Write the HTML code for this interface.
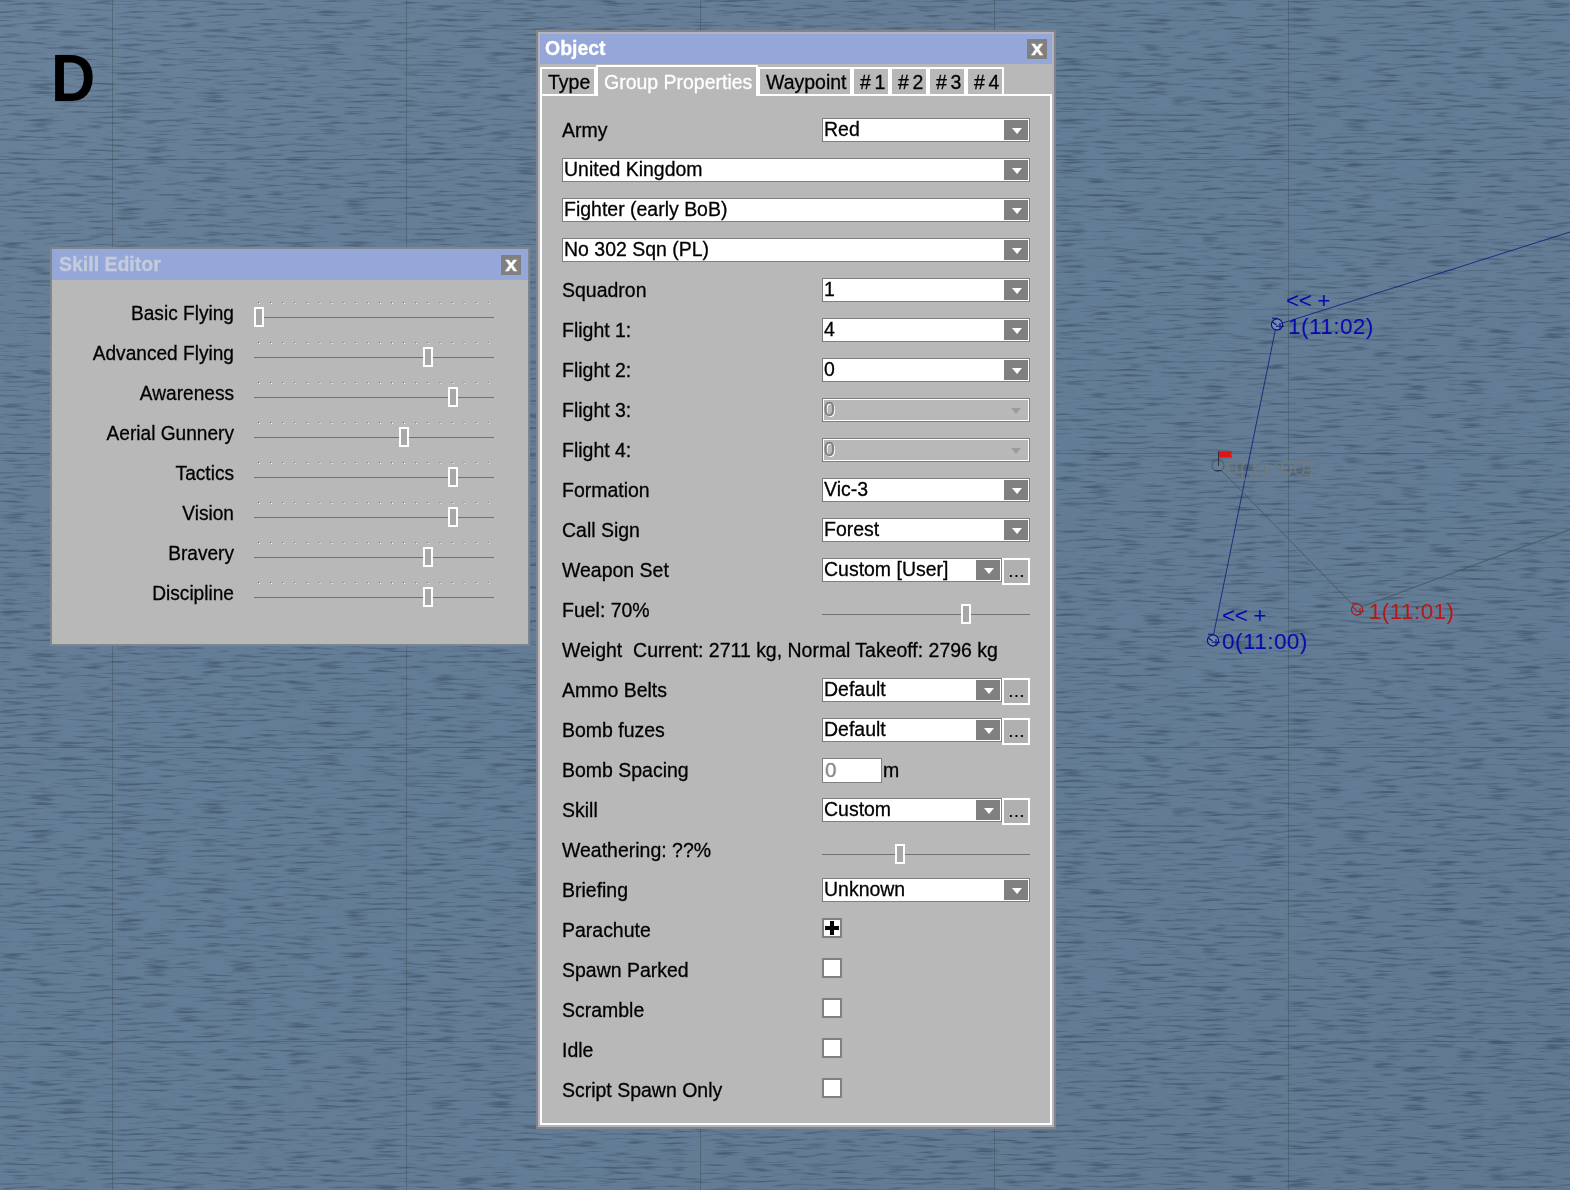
<!DOCTYPE html>
<html lang="en">
<head>
<meta charset="utf-8">
<title>Object - Group Properties</title>
<style>
*{box-sizing:border-box;margin:0;padding:0}
html,body{width:1570px;height:1190px;overflow:hidden;background:#647d96}
body{position:relative;-webkit-text-stroke:.3px currentColor;font-family:"Liberation Sans",Arial,sans-serif;font-size:20.5px;color:#000;line-height:24px}
.abs,.lb,.cb,.eb,.sl,.th,.ck,.inp,.un,.sn,.tk,.tab,.map,.ttl,.cls{position:absolute}
#bg{position:absolute;left:0;top:0;width:1570px;height:1190px}
.gv{position:absolute;top:0;width:1px;height:1190px;background:rgba(50,55,60,.3)}
.gh{position:absolute;left:0;height:1px;width:1570px;background:rgba(50,55,60,.3)}
#D{position:absolute;left:50.5px;top:43px;font-weight:bold;font-size:67px;line-height:70px;color:#000;-webkit-text-stroke:0;transform:scaleX(.915);transform-origin:0 0}

/* windows */
.win{position:absolute;background:#80848c}
.ttl{background:#94a7d8;color:#fff;font-weight:bold;line-height:28px;white-space:nowrap}
.sx{display:inline-block;transform:scaleX(.95);transform-origin:0 0;white-space:nowrap}
.cls{width:20px;height:20px;background:#808080;color:#fff;font-weight:bold;font-size:21px;line-height:17px;text-align:center}
.tab{top:67px;height:29px;border:2px solid #fff;background:#b8b8b8;line-height:26px;padding-top:0px;text-align:left;white-space:nowrap}
.tab.on{top:65px;height:31px;border-bottom:none;color:#fff;z-index:3;padding-top:2px}

.lb{left:562px;height:24px;line-height:24px;white-space:nowrap;margin-top:0px;transform:scaleX(.95);transform-origin:0 0}
.cb{height:24px;border:1px solid #808080;background:#fff;white-space:nowrap;overflow:hidden}
.cb .ct{position:absolute;left:.7px;top:-2px;line-height:24px;transform:scaleX(.95);transform-origin:0 0}
.cb .bt{position:absolute;right:1px;top:1px;width:24px;height:20px;background:#808080}
.cb .bt svg{position:absolute;left:8px;top:8px}
.cb.dis{background:#b8b8b8;box-shadow:inset 0 0 0 1px #fff}
.cb.dis .ct{color:#7c7c7c;text-shadow:1px 1px 0 #fff}
.cb.dis .da{position:absolute;right:8px;top:9px}
.eb{width:28px;height:27px;border:2px solid #fff;background:#b0b0b0;line-height:21px;text-align:center;letter-spacing:.3px;font-size:19px;-webkit-text-stroke:0;padding-left:1px}
.sl{height:1px;background:#727272}
.th{width:10px;height:20px;border:2px solid #fff;background:#a8a8a8}
.ck{left:822px;width:20px;height:20px;border:2px solid #808080;background:#fff}
.ck .pv{position:absolute;left:6px;top:1px;width:4px;height:14px;background:#000}
.ck .ph{position:absolute;left:1px;top:6px;width:14px;height:4px;background:#000}
.inp{width:60px;height:25px;border:1px solid #808080;background:#fff;color:#888;padding-left:2px;line-height:21px}
.un{line-height:24px;transform:scaleX(.95);transform-origin:0 0}
.sn{left:52px;width:182px;text-align:right;white-space:nowrap;line-height:24px;transform:scaleX(.932);transform-origin:100% 0}
.tk,.tk2{left:258px;width:232px;height:1px;background-image:linear-gradient(90deg,#707070 0,#707070 1px,transparent 1px);background-size:12.1px 1px;background-repeat:repeat-x}
.tk2{position:absolute;left:259px;background-image:linear-gradient(90deg,#fff 0,#fff 1px,transparent 1px)}
.map{white-space:nowrap;font-size:22.3px;line-height:24px;-webkit-text-stroke:0;letter-spacing:.55px}
</style>
</head>
<body>
<svg id="bg" width="1570" height="1190">
  <defs>
    <linearGradient id="shade" x1="0" y1="0" x2="1" y2="1"><stop offset="0" stop-color="#fff" stop-opacity=".035"/><stop offset=".5" stop-color="#808080" stop-opacity="0"/><stop offset="1" stop-color="#000" stop-opacity=".04"/></linearGradient>
    <filter id="water" x="0" y="0" width="100%" height="100%" color-interpolation-filters="sRGB">
      <feTurbulence type="fractalNoise" baseFrequency="0.035 0.36" numOctaves="2" seed="11"/>
      <feColorMatrix type="matrix" values="0 0 0 0 0.28  0 0 0 0 0.37  0 0 0 0 0.46  3.2 0 0 0 -1.62"/>
    </filter>
  </defs>
  <rect width="1570" height="1190" fill="#647d96"/>
  <rect width="1570" height="1190" filter="url(#water)"/>
  <rect width="1570" height="1190" fill="url(#shade)"/>
</svg>
<div class="gv" style="left:112px"></div><div class="gv" style="left:406px"></div><div class="gv" style="left:700px"></div><div class="gv" style="left:994px"></div><div class="gv" style="left:1288px"></div>
<div class="gh" style="top:159px"></div><div class="gh" style="top:453px"></div><div class="gh" style="top:747px"></div><div class="gh" style="top:1041px"></div>

<div id="D">D</div>

<!-- map overlay -->
<svg class="abs" style="left:0;top:0" width="1570" height="1190">
  <defs>
    <g id="wp" fill="none" stroke-width="1.1">
      <circle cx="0" cy="0" r="5.6"/>
      <path d="M-5 -6.300h5.500M-4.500 -2.500l4 3M-1 1.700h8M3 -1.500v7"/>
    </g>
  </defs>
  <g fill="none" stroke-width=".9">
    <path d="M1278 324.500L1570 232M1275.500 329L1213.500 635" stroke="#14247e"/>
    <path d="M1221 470L1353 605M1361 607L1570 529.500" stroke="#4c5660"/>
  </g>
  <circle cx="1277" cy="324.500" r="5" fill="rgba(150,160,230,.45)"/>
  <use href="#wp" x="1277" y="324.500" stroke="#0c1278"/>
  <circle cx="1213" cy="640.500" r="5" fill="rgba(150,160,230,.35)"/>
  <use href="#wp" x="1213" y="640.500" stroke="#0c1278"/>
  <use href="#wp" x="1357" y="609.500" stroke="#a81c1c"/>
  <g fill="none" stroke-width="1">
    <circle cx="1218" cy="465.500" r="6" stroke="#4a5560"/>
    <path d="M1218.500 451V466M1214.500 470.500h7" stroke="#2a2e34" stroke-width=".9"/>
  </g>
  <path d="M1219 451.500h13v1.500l-1 1.500l1 1.500v1.500h-13z" fill="#e01414"/>
</svg>
<div class="map" style="left:1286px;top:289px;letter-spacing:-.3px;color:#0808b0">&lt;&lt; +</div>
<div class="map" style="left:1288px;top:315px;color:#0808b0">1(11:02)</div>
<div class="map" style="left:1226px;top:457px;letter-spacing:.9px;color:rgba(118,120,120,.85)">0(11:00)</div>
<div class="map" style="left:1222px;top:604px;letter-spacing:-.3px;color:#0808b0">&lt;&lt; +</div>
<div class="map" style="left:1222px;top:630px;color:#0808b0">0(11:00)</div>
<div class="map" style="left:1369px;top:600px;color:#b81818">1(11:01)</div>

<!-- Skill Editor window -->
<div class="win" style="left:50px;top:247px;width:480px;height:399px"></div>
<div class="abs" style="left:52px;top:249px;width:476px;height:395px;background:#b8b8b8"></div>
<div class="ttl" style="left:52px;top:249px;width:476px;height:31px;color:#c3cbdc;padding-left:7px;padding-top:1px"><span class="sx">Skill Editor</span></div>
<div class="cls" style="left:501px;top:255px">x</div>
<div class="sn" style="top:301px">Basic Flying</div>
<div class="tk" style="top:302px"></div><div class="tk2" style="top:303px"></div>
<div class="sl" style="left:254px;top:317px;width:240px"></div><div class="th" style="left:254px;top:307px"></div>
<div class="sn" style="top:341px">Advanced Flying</div>
<div class="tk" style="top:342px"></div><div class="tk2" style="top:343px"></div>
<div class="sl" style="left:254px;top:357px;width:240px"></div><div class="th" style="left:423px;top:347px"></div>
<div class="sn" style="top:381px">Awareness</div>
<div class="tk" style="top:382px"></div><div class="tk2" style="top:383px"></div>
<div class="sl" style="left:254px;top:397px;width:240px"></div><div class="th" style="left:448px;top:387px"></div>
<div class="sn" style="top:421px">Aerial Gunnery</div>
<div class="tk" style="top:422px"></div><div class="tk2" style="top:423px"></div>
<div class="sl" style="left:254px;top:437px;width:240px"></div><div class="th" style="left:399px;top:427px"></div>
<div class="sn" style="top:461px">Tactics</div>
<div class="tk" style="top:462px"></div><div class="tk2" style="top:463px"></div>
<div class="sl" style="left:254px;top:477px;width:240px"></div><div class="th" style="left:448px;top:467px"></div>
<div class="sn" style="top:501px">Vision</div>
<div class="tk" style="top:502px"></div><div class="tk2" style="top:503px"></div>
<div class="sl" style="left:254px;top:517px;width:240px"></div><div class="th" style="left:448px;top:507px"></div>
<div class="sn" style="top:541px">Bravery</div>
<div class="tk" style="top:542px"></div><div class="tk2" style="top:543px"></div>
<div class="sl" style="left:254px;top:557px;width:240px"></div><div class="th" style="left:423px;top:547px"></div>
<div class="sn" style="top:581px">Discipline</div>
<div class="tk" style="top:582px"></div><div class="tk2" style="top:583px"></div>
<div class="sl" style="left:254px;top:597px;width:240px"></div><div class="th" style="left:423px;top:587px"></div>

<!-- Object window -->
<div class="win" style="left:536px;top:30px;width:520px;height:1099px"></div>
<div class="abs" style="left:538px;top:32px;width:516px;height:1095px;background:#b4b4bc"></div>
<div class="abs" style="left:540px;top:34px;width:512px;height:1091px;background:#b8b8b8"></div>
<div class="ttl" style="left:540px;top:34px;width:512px;height:30px;padding-left:5px"><span class="sx">Object</span></div>
<div class="cls" style="left:1027px;top:39px">x</div>
<!-- tab page -->
<div class="abs" style="left:540px;top:94px;width:512px;height:1031px;border:2px solid #fff;background:#b8b8b8"></div>
<div class="tab" style="left:540px;width:56px;padding-left:6px"><span class="sx">Type</span></div>
<div class="tab on" style="left:596px;width:162px;padding-left:6px"><span class="sx">Group Properties</span></div>
<div class="tab" style="left:758px;width:94px;padding-left:6px"><span class="sx">Waypoint</span></div>
<div class="tab" style="left:852px;width:38px;padding-left:6px"><span class="sx" style="letter-spacing:-.9px"># 1</span></div>
<div class="tab" style="left:890px;width:38px;padding-left:6px"><span class="sx" style="letter-spacing:-.9px"># 2</span></div>
<div class="tab" style="left:928px;width:38px;padding-left:6px"><span class="sx" style="letter-spacing:-.9px"># 3</span></div>
<div class="tab" style="left:966px;width:38px;padding-left:6px"><span class="sx" style="letter-spacing:-.9px"># 4</span></div>
<div class="lb" style="top:118px">Army</div>
<div class="cb" style="left:822px;top:118px;width:208px"><span class="ct">Red</span><span class="bt"><svg width="10" height="6" viewBox="0 0 10 6"><path d="M0 0H10L5 6Z" fill="#fff"/></svg></span></div>
<div class="cb" style="left:562px;top:158px;width:468px"><span class="ct">United Kingdom</span><span class="bt"><svg width="10" height="6" viewBox="0 0 10 6"><path d="M0 0H10L5 6Z" fill="#fff"/></svg></span></div>
<div class="cb" style="left:562px;top:198px;width:468px"><span class="ct">Fighter (early BoB)</span><span class="bt"><svg width="10" height="6" viewBox="0 0 10 6"><path d="M0 0H10L5 6Z" fill="#fff"/></svg></span></div>
<div class="cb" style="left:562px;top:238px;width:468px"><span class="ct">No 302 Sqn (PL)</span><span class="bt"><svg width="10" height="6" viewBox="0 0 10 6"><path d="M0 0H10L5 6Z" fill="#fff"/></svg></span></div>
<div class="lb" style="top:278px">Squadron</div>
<div class="cb" style="left:822px;top:278px;width:208px"><span class="ct">1</span><span class="bt"><svg width="10" height="6" viewBox="0 0 10 6"><path d="M0 0H10L5 6Z" fill="#fff"/></svg></span></div>
<div class="lb" style="top:318px">Flight 1:</div>
<div class="cb" style="left:822px;top:318px;width:208px"><span class="ct">4</span><span class="bt"><svg width="10" height="6" viewBox="0 0 10 6"><path d="M0 0H10L5 6Z" fill="#fff"/></svg></span></div>
<div class="lb" style="top:358px">Flight 2:</div>
<div class="cb" style="left:822px;top:358px;width:208px"><span class="ct">0</span><span class="bt"><svg width="10" height="6" viewBox="0 0 10 6"><path d="M0 0H10L5 6Z" fill="#fff"/></svg></span></div>
<div class="lb" style="top:398px">Flight 3:</div>
<div class="cb dis" style="left:822px;top:398px;width:208px"><span class="ct">0</span><svg class="da" width="10" height="6" viewBox="0 0 10 6"><path d="M0 0H10L5 6Z" fill="#9c9c9c"/></svg></div>
<div class="lb" style="top:438px">Flight 4:</div>
<div class="cb dis" style="left:822px;top:438px;width:208px"><span class="ct">0</span><svg class="da" width="10" height="6" viewBox="0 0 10 6"><path d="M0 0H10L5 6Z" fill="#9c9c9c"/></svg></div>
<div class="lb" style="top:478px">Formation</div>
<div class="cb" style="left:822px;top:478px;width:208px"><span class="ct">Vic-3</span><span class="bt"><svg width="10" height="6" viewBox="0 0 10 6"><path d="M0 0H10L5 6Z" fill="#fff"/></svg></span></div>
<div class="lb" style="top:518px">Call Sign</div>
<div class="cb" style="left:822px;top:518px;width:208px"><span class="ct">Forest</span><span class="bt"><svg width="10" height="6" viewBox="0 0 10 6"><path d="M0 0H10L5 6Z" fill="#fff"/></svg></span></div>
<div class="lb" style="top:558px">Weapon Set</div>
<div class="cb" style="left:822px;top:558px;width:180px"><span class="ct">Custom [User]</span><span class="bt"><svg width="10" height="6" viewBox="0 0 10 6"><path d="M0 0H10L5 6Z" fill="#fff"/></svg></span></div>
<div class="eb" style="left:1002px;top:558px">...</div>
<div class="lb" style="top:598px">Fuel: 70%</div>
<div class="sl" style="left:822px;top:614px;width:208px"></div><div class="th" style="left:961px;top:604px"></div>
<div class="lb" style="top:638px">Weight&nbsp; Current: 2711 kg, Normal Takeoff: 2796 kg</div>
<div class="lb" style="top:678px">Ammo Belts</div>
<div class="cb" style="left:822px;top:678px;width:180px"><span class="ct">Default</span><span class="bt"><svg width="10" height="6" viewBox="0 0 10 6"><path d="M0 0H10L5 6Z" fill="#fff"/></svg></span></div>
<div class="eb" style="left:1002px;top:678px">...</div>
<div class="lb" style="top:718px">Bomb fuzes</div>
<div class="cb" style="left:822px;top:718px;width:180px"><span class="ct">Default</span><span class="bt"><svg width="10" height="6" viewBox="0 0 10 6"><path d="M0 0H10L5 6Z" fill="#fff"/></svg></span></div>
<div class="eb" style="left:1002px;top:718px">...</div>
<div class="lb" style="top:758px">Bomb Spacing</div>
<div class="inp" style="left:822px;top:758px">0</div><div class="un" style="left:883px;top:758px">m</div>
<div class="lb" style="top:798px">Skill</div>
<div class="cb" style="left:822px;top:798px;width:180px"><span class="ct">Custom</span><span class="bt"><svg width="10" height="6" viewBox="0 0 10 6"><path d="M0 0H10L5 6Z" fill="#fff"/></svg></span></div>
<div class="eb" style="left:1002px;top:798px">...</div>
<div class="lb" style="top:838px">Weathering: ??%</div>
<div class="sl" style="left:822px;top:854px;width:208px"></div><div class="th" style="left:895px;top:844px"></div>
<div class="lb" style="top:878px">Briefing</div>
<div class="cb" style="left:822px;top:878px;width:208px"><span class="ct">Unknown</span><span class="bt"><svg width="10" height="6" viewBox="0 0 10 6"><path d="M0 0H10L5 6Z" fill="#fff"/></svg></span></div>
<div class="lb" style="top:918px">Parachute</div>
<div class="ck" style="top:918px"><i class="pv"></i><i class="ph"></i></div>
<div class="lb" style="top:958px">Spawn Parked</div>
<div class="ck" style="top:958px"></div>
<div class="lb" style="top:998px">Scramble</div>
<div class="ck" style="top:998px"></div>
<div class="lb" style="top:1038px">Idle</div>
<div class="ck" style="top:1038px"></div>
<div class="lb" style="top:1078px">Script Spawn Only</div>
<div class="ck" style="top:1078px"></div>
</body>
</html>
